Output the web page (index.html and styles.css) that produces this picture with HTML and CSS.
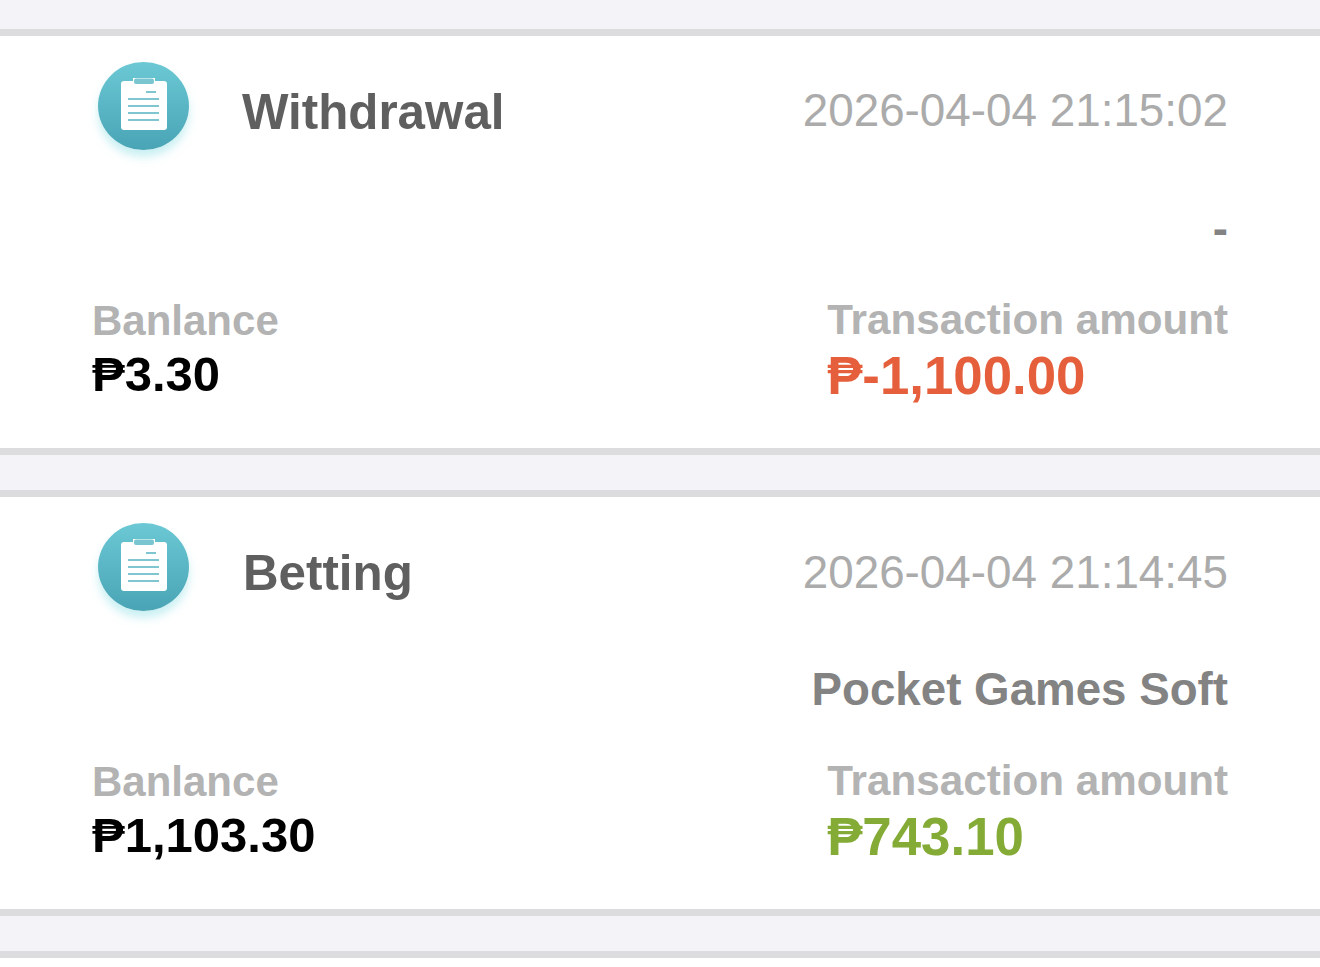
FILE: index.html
```html
<!DOCTYPE html>
<html lang="en">

<head>
    <meta charset="UTF-8">
    <title>Transaction history</title>
    <link rel="stylesheet" href="styles.css">
</head>

<body>
    <ul class="records">
        <li class="record">
            <div class="record-head">
                <div class="record-icon">
                    <svg viewBox="0 0 46 52" aria-hidden="true">
                        <path d="M3 3h9V0h22v3h9a3 3 0 0 1 3 3v43a3 3 0 0 1-3 3H3a3 3 0 0 1-3-3V6a3 3 0 0 1 3-3z" fill="#fff"></path>
                        <rect x="13" y="0.5" width="20" height="5.5" rx="2" fill="#79c5d0"></rect>
                        <path d="M25 14h10M7 21h31M7 28h31M7 35h31M7 42h31" stroke="#7fc6d1" stroke-width="2" fill="none"></path>
                    </svg>
                </div>
                <span class="record-type">Withdrawal</span>
                <span class="record-date">2026-04-04 21:15:02</span>
            </div>
            <div class="record-game">-</div>
            <div class="record-foot">
                <div class="record-col">
                    <span class="record-label balance">Banlance</span>
                    <span class="record-money">₱3.30</span>
                </div>
                <div class="record-col">
                    <span class="record-label">Transaction amount</span>
                    <span class="record-money out">₱-1,100.00</span>
                </div>
            </div>
        </li>
        <li class="record">
            <div class="record-head">
                <div class="record-icon">
                    <svg viewBox="0 0 46 52" aria-hidden="true">
                        <path d="M3 3h9V0h22v3h9a3 3 0 0 1 3 3v43a3 3 0 0 1-3 3H3a3 3 0 0 1-3-3V6a3 3 0 0 1 3-3z" fill="#fff"></path>
                        <rect x="13" y="0.5" width="20" height="5.5" rx="2" fill="#79c5d0"></rect>
                        <path d="M25 14h10M7 21h31M7 28h31M7 35h31M7 42h31" stroke="#7fc6d1" stroke-width="2" fill="none"></path>
                    </svg>
                </div>
                <span class="record-type betting">Betting</span>
                <span class="record-date second">2026-04-04 21:14:45</span>
            </div>
            <div class="record-game">Pocket Games Soft</div>
            <div class="record-foot">
                <div class="record-col">
                    <span class="record-label balance">Banlance</span>
                    <span class="record-money">₱1,103.30</span>
                </div>
                <div class="record-col">
                    <span class="record-label">Transaction amount</span>
                    <span class="record-money in">₱743.10</span>
                </div>
            </div>
        </li>
    </ul>
</body>

</html>
```

FILE: styles.css
```css
body {
    margin: 0;
    background-color: #fff;
    font-family: "Liberation Sans", Arial, sans-serif;
}

.records {
    list-style: none;
    margin: 0;
    padding: 29px 0 35px 0;
    background-color: #f3f3f8;
    border-bottom: 7px solid #dcdcde;
}

.record {
    height: 412px;
    padding: 0 92px;
    background-color: #fff;
    border-top: 7px solid #dcdcde;
    border-bottom: 7px solid #dcdcde;
    margin-bottom: 35px;
}

.record:last-child {
    margin-bottom: 0;
}

.record-head {
    display: flex;
    align-items: center;
    height: 140px;
}

.record-icon {
    width: 91px;
    height: 88px;
    margin-left: 6px;
    flex: none;
    display: flex;
    align-items: center;
    justify-content: center;
    border-radius: 50%;
    background: linear-gradient(#6bc8d4, #49a4b5);
    box-shadow: 0 7px 9px rgba(150, 225, 232, .5);
}

.record-icon svg {
    width: 46px;
    height: 52px;
    margin-bottom: 4px;
}

.record-type {
    margin-left: 53px;
    padding-top: 10px;
    font-size: 49.3px;
    font-weight: bold;
    color: #5f5f5f;
}

.record-type.betting {
    margin-left: 54px;
}

.record-date {
    margin-left: auto;
    padding-top: 10px;
    font-size: 45.8px;
    color: #ababab;
}

.record-date.second {
    padding-top: 12px;
}

.record-game {
    height: 118px;
    line-height: 106px;
    text-align: right;
    font-size: 45.7px;
    font-weight: bold;
    color: #838383;
}

.record-foot {
    display: flex;
    justify-content: space-between;
}

.record-col {
    display: flex;
    flex-direction: column;
}

.record-label {
    height: 50px;
    padding-top: 1px;
    box-sizing: border-box;
    font-size: 42.2px;
    line-height: 50px;
    font-weight: bold;
    color: #b3b3b3;
}

.record-label.balance {
    padding-top: 2px;
    font-size: 42px;
}

.record-money {
    font-size: 49px;
    line-height: 60px;
    font-weight: bold;
    color: #000;
}

.record-money.out,
.record-money.in {
    margin-top: 2px;
    font-size: 52.8px;
}

.record-money.out {
    color: #e55f3c;
}

.record-money.in {
    color: #84ab35;
}
```
